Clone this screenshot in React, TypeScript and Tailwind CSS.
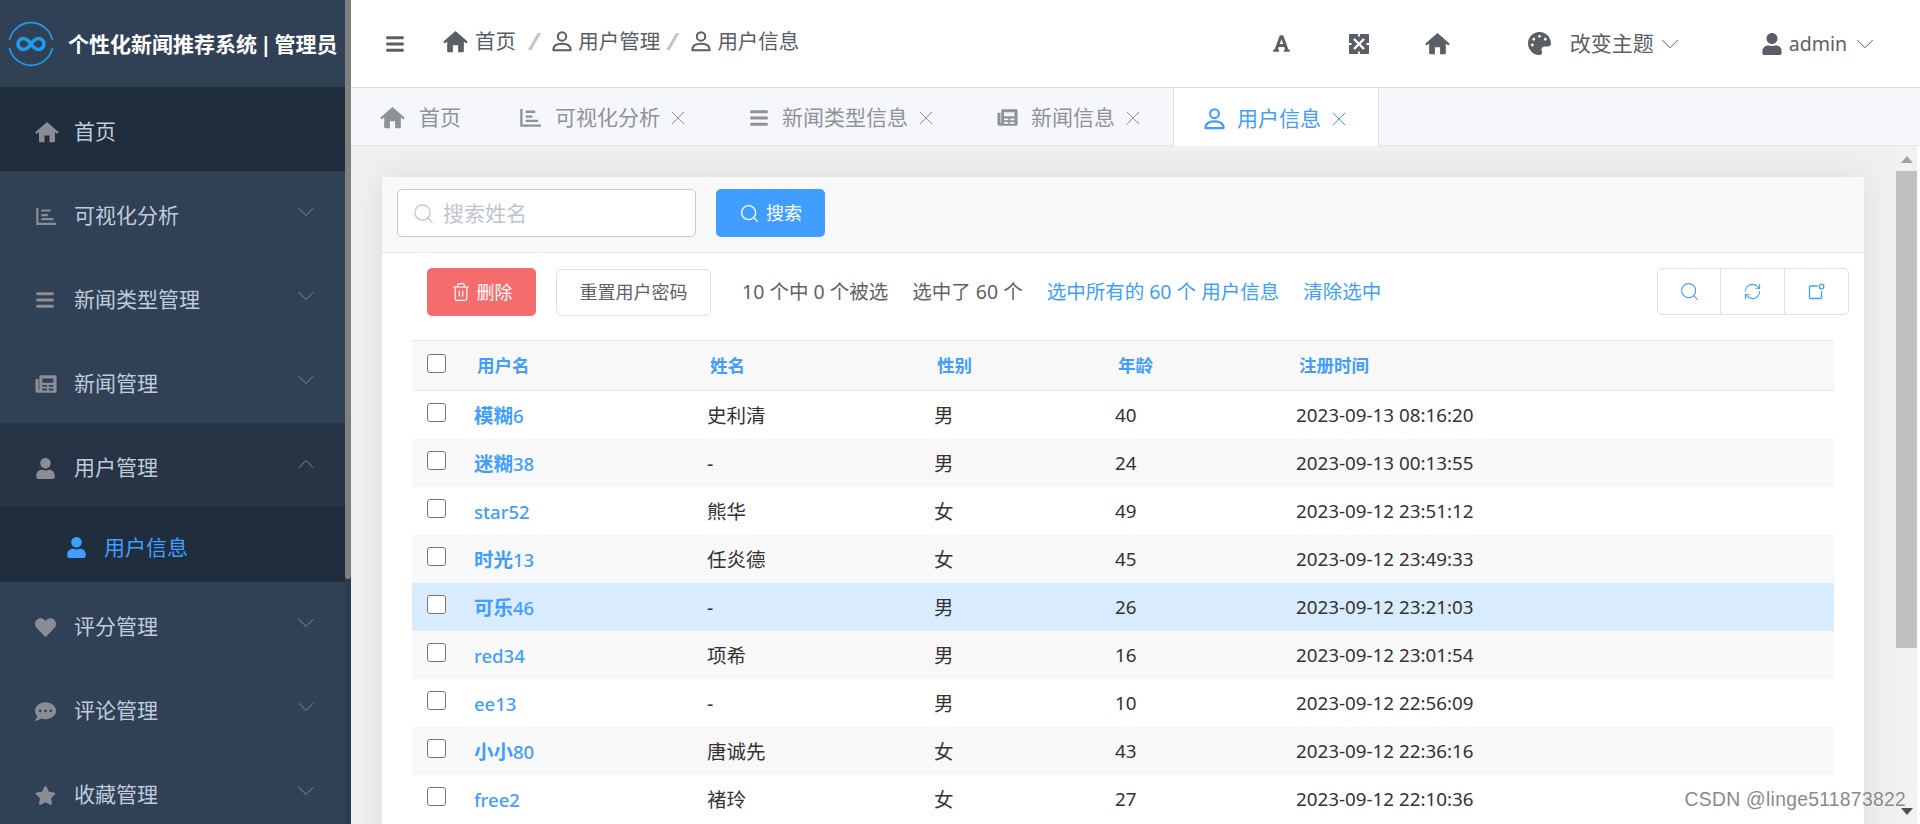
import { FC, ReactNode } from 'react'
import { FaBars, FaUser, FaHeart, FaCommentDots, FaStar, FaFont, FaPalette } from 'react-icons/fa'
import { ChevronDown, ChevronUp, Search, X, RefreshCw, Trash2 } from 'lucide-react'

const HomeIcon: FC<{ size: number }> = ({ size }) => (
  <svg width={size} height={size} viewBox="0 0 24 24" fill="currentColor">
    <path d="M12 2 23.800 12.200 22.300 14 20 12.100V21a1.200 1.200 0 0 1-1.200 1.200h-4.300v-6.700h-5v6.700H5.200A1.200 1.200 0 0 1 4 21v-8.900L1.700 14 .2 12.200z" />
  </svg>
)

const ChartIcon: FC<{ size: number }> = ({ size }) => (
  <svg width={size} height={size} viewBox="0 0 24 24" fill="none" stroke="currentColor" strokeWidth="2.4">
    <path d="M2.500 3v17.500H23" />
    <path d="M7 6h10M7 11h7M7 15.500h13" />
  </svg>
)

const NewsIcon: FC<{ size: number }> = ({ size }) => (
  <svg width={size} height={size} viewBox="0 0 24 24" fill="currentColor" fillRule="evenodd">
    <path d="M6 2.500h16a1.500 1.500 0 0 1 1.500 1.500v16a1.500 1.500 0 0 1-1.500 1.500H3A2.500 2.500 0 0 1 .5 19V6.500H4v12h.8V4A1.500 1.500 0 0 1 6 2.500zM8 6v4.500h12V6zM8 13v2h5v-2zM15 13v2h5v-2zM8 17v2h5v-2zM15 17v2h5v-2z" />
  </svg>
)

const ExpandIcon: FC<{ size: number }> = ({ size }) => (
  <svg width={size} height={size} viewBox="0 0 20 20">
    <rect x="0" y="0" width="20" height="20" rx="1" fill="currentColor" />
    <path d="M5 5l10 10M15 5 5 15" stroke="#fff" strokeWidth="2.400" />
    <path d="M10 0v2.500M10 17.500V20M0 10h2.500M17.500 10H20" stroke="#fff" strokeWidth="2" />
  </svg>
)

const UserOutline: FC<{ size: number }> = ({ size }) => (
  <svg width={size} height={size} viewBox="0 0 24 24" fill="none" stroke="currentColor" strokeWidth="2.200">
    <circle cx="12" cy="7" r="4.600" />
    <path d="M2.500 22c0-5 3.500-7 9.500-7s9.500 2 9.500 7z" strokeLinejoin="round" />
  </svg>
)

const Logo = () => (
  <svg width="46" height="46" viewBox="0 0 46 46" fill="none" stroke="#1f9bf0">
    <path d="M1.500 19A22 22 0 0 1 44.500 19M44.500 27A22 22 0 0 1 1.500 27" strokeWidth="1.600" />
    <path
      d="M23 23c-2.500-3.500-4.500-5.500-7.500-5.500a5.500 5.500 0 0 0 0 11c3 0 5-2 7.500-5.500s4.500-5.500 7.500-5.500a5.500 5.500 0 0 1 0 11c-3 0-5-2-7.500-5.500z"
      strokeWidth="3.600"
    />
  </svg>
)

const menu: { icon: ReactNode; label: string; arrow?: boolean; dark?: boolean }[] = [
  { icon: <HomeIcon size={24} />, label: '首页', dark: true },
  { icon: <ChartIcon size={22} />, label: '可视化分析', arrow: true },
  { icon: <FaBars size={20} />, label: '新闻类型管理', arrow: true },
  { icon: <NewsIcon size={22} />, label: '新闻管理', arrow: true },
]

const menuAfter: { icon: ReactNode; label: string }[] = [
  { icon: <FaHeart size={21} />, label: '评分管理' },
  { icon: <FaCommentDots size={21} />, label: '评论管理' },
  { icon: <FaStar size={21} />, label: '收藏管理' },
]

const MenuRow: FC<{ icon: ReactNode; label: string; arrow?: ReactNode; className?: string }> = ({
  icon,
  label,
  arrow,
  className,
}) => (
  <div className={`h-[84px] shrink-0 flex items-center pt-[6px] pl-[35px] pr-[25px] ${className ?? ''}`}>
    <span className="w-[39px] text-[#8a8d96] flex items-center">{icon}</span>
    <span className="text-[21px] text-[#bfcbd9]">{label}</span>
    {arrow && <span className="ml-auto text-[#8a8f99] -mt-[8px]">{arrow}</span>}
  </div>
)

const Sidebar = () => (
  <aside className="w-[351px] h-full shrink-0 flex bg-[#2a3a4f]">
    <div className="w-[345px] h-full bg-[#304156] overflow-hidden flex flex-col">
      <div className="h-[87px] shrink-0 flex items-center pl-[8px]">
        <Logo />
        <span className="ml-[14px] mt-[2px] text-[21px] font-bold text-white whitespace-nowrap [word-spacing:-2.500px]">
          个性化新闻推荐系统 | 管理员
        </span>
      </div>
      {menu.map((m) => (
        <MenuRow
          key={m.label}
          icon={m.icon}
          label={m.label}
          className={m.dark ? 'bg-[#1f2d3d]' : ''}
          arrow={m.arrow ? <ChevronDown size={28} strokeWidth={0.8} /> : null}
        />
      ))}
      <MenuRow
        icon={<FaUser size={21} />}
        label="用户管理"
        className="bg-[#263445]"
        arrow={<ChevronUp size={28} strokeWidth={0.8} />}
      />
      <div className="h-[75px] shrink-0 bg-[#1f2d3d] flex items-center pt-[6px] pl-[66px] text-[#409eff]">
        <span className="w-[38px]">
          <FaUser size={21} />
        </span>
        <span className="text-[21px]">用户信息</span>
      </div>
      {menuAfter.map((m) => (
        <MenuRow key={m.label} icon={m.icon} label={m.label} arrow={<ChevronDown size={28} strokeWidth={0.8} />} />
      ))}
    </div>
    <div className="w-[6px] h-[579px] bg-[#808080] rounded-b-[3px]" />
  </aside>
)

const Header = () => (
  <header className="h-[88px] shrink-0 bg-white border-b border-[#d8dce5] flex items-center text-[#5a5e66]">
    <span className="ml-[34px]">
      <FaBars size={20} />
    </span>
    <nav className="ml-[38px] flex items-center text-[20.500px] -mt-[5px] whitespace-nowrap">
      <HomeIcon size={25} />
      <span className="ml-[7px]">首页</span>
      <span className="ml-[13px] mr-[12px] text-[24px] text-[#c0c4cc] font-bold italic">/</span>
      <UserOutline size={22} />
      <span className="ml-[5px]">用户管理</span>
      <span className="ml-[7px] mr-[13px] text-[24px] text-[#c0c4cc] font-bold italic">/</span>
      <UserOutline size={22} />
      <span className="ml-[5px]">用户信息</span>
    </nav>
    <div className="ml-auto flex items-center whitespace-nowrap mr-[40px]">
      <FaFont size={19} />
      <span className="ml-[58px]">
        <ExpandIcon size={20} />
      </span>
      <span className="ml-[56px]">
        <HomeIcon size={25} />
      </span>
      <span className="ml-[78px]">
        <FaPalette size={23} />
      </span>
      <span className="ml-[19px] text-[21px]">改变主题</span>
      <ChevronDown className="ml-[1px]" size={30} strokeWidth={0.8} />
      <span className="ml-[76px]">
        <FaUser size={22} />
      </span>
      <span className="ml-[6px] text-[19.500px]">admin</span>
      <ChevronDown className="ml-[3px]" size={30} strokeWidth={0.8} />
    </div>
  </header>
)

const tabs: { icon: ReactNode; label: string }[] = [
  { icon: <ChartIcon size={23} />, label: '可视化分析' },
  { icon: <FaBars size={20} />, label: '新闻类型信息' },
  { icon: <NewsIcon size={21} />, label: '新闻信息' },
]

const Tabs = () => (
  <div className="h-[58px] shrink-0 bg-[#f5f7fb] border-b border-[#e4e6ec] flex text-[#8f9298]">
    <div className="w-[137px] shrink-0 flex items-center pt-[2px] pl-[29px]">
      <HomeIcon size={25} />
      <span className="ml-[14px] text-[21px]">首页</span>
    </div>
    {tabs.map((t) => (
      <div key={t.label} className="shrink-0 flex items-center pt-[2px] pl-[31px] pr-[28px]">
        {t.icon}
        <span className="ml-[13px] text-[21px]">{t.label}</span>
        <X className="ml-[6px]" size={24} strokeWidth={1} />
      </div>
    ))}
    <div className="shrink-0 h-[59px] bg-white border-x border-[#dcdfe6] flex items-center pt-[2px] pl-[29px] pr-[27px] text-[#409eff]">
      <UserOutline size={23} />
      <span className="ml-[11px] text-[21px]">用户信息</span>
      <X className="ml-[6px]" size={24} strokeWidth={1} />
    </div>
  </div>
)

const rows = [
  { cn: '模糊', rest: '6', name: '史利清', sex: '男', age: 40, time: '2023-09-13 08:16:20' },
  { cn: '迷糊', rest: '38', name: '-', sex: '男', age: 24, time: '2023-09-13 00:13:55' },
  { cn: '', rest: 'star52', name: '熊华', sex: '女', age: 49, time: '2023-09-12 23:51:12' },
  { cn: '时光', rest: '13', name: '任炎德', sex: '女', age: 45, time: '2023-09-12 23:49:33' },
  { cn: '可乐', rest: '46', name: '-', sex: '男', age: 26, time: '2023-09-12 23:21:03', selected: true },
  { cn: '', rest: 'red34', name: '项希', sex: '男', age: 16, time: '2023-09-12 23:01:54' },
  { cn: '', rest: 'ee13', name: '-', sex: '男', age: 10, time: '2023-09-12 22:56:09' },
  { cn: '小小', rest: '80', name: '唐诚先', sex: '女', age: 43, time: '2023-09-12 22:36:16' },
  { cn: '', rest: 'free2', name: '褚玲', sex: '女', age: 27, time: '2023-09-12 22:10:36' },
]

const gridCols = 'grid grid-cols-[62px_233px_227px_181px_181px_1fr] items-center'

const Check = () => (
  <span className="block ml-[15px] -mt-[5px] w-[19px] h-[19px] rounded-[3px] border-[1.500px] border-[#767676] bg-white" />
)

const UserTable = () => (
  <div className="mx-[30px] text-[19.500px] text-[#333]">
    <div className={`${gridCols} h-[51px] bg-[#f8f8f8] border-y border-[#e9e9e9] text-[17.500px] font-bold text-[#409eff]`}>
      <Check />
      <span className="pl-[3px]">用户名</span>
      <span className="pl-[3px]">姓名</span>
      <span className="pl-[3px]">性别</span>
      <span className="pl-[3px]">年龄</span>
      <span className="pl-[3px]">注册时间</span>
    </div>
    {rows.map((r, i) => (
      <div
        key={r.rest}
        className={`${gridCols} h-[48px] ${r.selected ? 'bg-[#d9ebff]' : i % 2 === 1 ? 'bg-[#f8f8f8]' : 'bg-white'}`}
      >
        <Check />
        <span className="pt-[1px] text-[#409eff] text-[18.500px] font-medium">
          {r.cn && <b className="font-bold text-[19.500px]">{r.cn}</b>}
          {r.rest}
        </span>
        <span className="pt-[1px]">{r.name}</span>
        <span className="pt-[1px]">{r.sex}</span>
        <span className="pt-[1px] text-[18.800px]">{r.age}</span>
        <span className="pt-[1px] text-[18.800px]">{r.time}</span>
      </div>
    ))}
  </div>
)

const Card = () => (
  <div className="ml-[31px] mr-[32px] mt-[31px] bg-white shadow-[0_0_30px_rgba(0,0,0,0.09)] h-[700px]">
    <div className="h-[76px] bg-[#f8f8f8] border-b border-[#e9e9e9] flex items-start pt-[12px] pl-[15px]">
      <div className="w-[299px] h-[48px] rounded-[5px] border border-[#c9c9c9] bg-white flex items-center pl-[14px] text-[#c0c4cc]">
        <Search size={23} strokeWidth={1.300} />
        <span className="ml-[8px] mt-[2px] text-[21px]">搜索姓名</span>
      </div>
      <button className="ml-[20px] w-[109px] h-[48px] rounded-[5px] bg-[#409eff] text-white flex items-center justify-center gap-[6px] text-[18px]">
        <Search size={21} strokeWidth={1.500} />
        搜索
      </button>
    </div>
    <div className="h-[87px] flex items-start pt-[15px] pl-[45px] pr-[15px] whitespace-nowrap text-[19.500px]">
      <button className="w-[109px] h-[48px] rounded-[5px] bg-[#f56c6c] text-white flex items-center justify-center gap-[6px] text-[18px]">
        <Trash2 size={20} strokeWidth={1.400} />
        删除
      </button>
      <button className="ml-[20px] w-[155px] h-[47px] mt-[1px] rounded-[5px] border border-[#dcdfe6] text-[#606266] text-[18px]">
        重置用户密码
      </button>
      <div className="ml-[31px] h-[48px] flex items-center text-[#606266]">
        <span>10 个中 0 个被选</span>
        <span className="ml-[24px]">选中了 60 个</span>
        <span className="ml-[24px] text-[#409eff]">选中所有的 60 个 用户信息</span>
        <span className="ml-[24px] text-[#409eff]">清除选中</span>
      </div>
      <div className="ml-auto h-[47px] w-[192px] grid grid-cols-3 rounded-[5px] border border-[#dcdfe6] divide-x divide-[#dcdfe6] text-[#409eff]">
        <span className="flex items-center justify-center">
          <Search size={21} strokeWidth={1.200} />
        </span>
        <span className="flex items-center justify-center">
          <RefreshCw size={19} strokeWidth={1.300} />
        </span>
        <span className="flex items-center justify-center">
          <svg width="18" height="18" viewBox="0 0 18 18" fill="none" stroke="currentColor" strokeWidth="1.300">
            <path d="M10.500 3H3.500a1 1 0 0 0-1 1v10.500a1 1 0 0 0 1 1h10a1 1 0 0 0 1-1V8" />
            <circle cx="14.500" cy="3.500" r="2.300" />
          </svg>
        </span>
      </div>
    </div>
    <UserTable />
  </div>
)

const PageScrollbar = () => (
  <div className="w-[24px] shrink-0 h-full bg-[#f1f1f1] border-r-[3px] border-white flex flex-col items-center">
    <span className="mt-[10px] w-0 h-0 border-x-[6px] border-x-transparent border-b-[7px] border-b-[#a3a3a3]" />
    <span className="mt-[8px] w-full h-[477px] bg-[#c1c1c1]" />
    <span className="mt-auto mb-[9px] w-0 h-0 border-x-[6px] border-x-transparent border-t-[7px] border-t-[#505050]" />
  </div>
)

const App = () => (
  <div className="relative w-screen h-screen overflow-hidden flex bg-white font-['Noto_Sans','Noto_Sans_CJK_SC',sans-serif]">
    <Sidebar />
    <main className="flex-1 min-w-0 h-full flex flex-col">
      <Header />
      <Tabs />
      <div className="flex-1 min-h-0 flex bg-[#f0f0f0]">
        <div className="flex-1 min-w-0 overflow-hidden">
          <Card />
        </div>
        <PageScrollbar />
      </div>
    </main>
    <span className="absolute right-[14px] bottom-[9px] text-[19.300px] tracking-[0.300px] text-[#8a8a8a] font-['Liberation_Sans',sans-serif] [text-shadow:0_0_2px_#fff]">
      CSDN @linge511873822
    </span>
  </div>
)

export default App
